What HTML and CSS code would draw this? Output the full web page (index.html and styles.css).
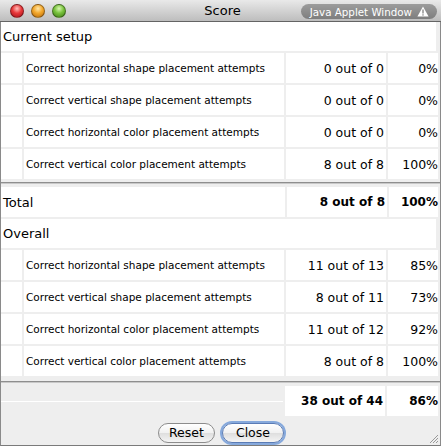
FILE: index.html
```html
<!DOCTYPE html>
<html>
<head>
<meta charset="utf-8">
<link rel="stylesheet" href="styles.css">
</head>
<body>
<div class="window">
  <div class="titlebar">
    <div class="lights">
      <span class="light red"></span>
      <span class="light yellow"></span>
      <span class="light green"></span>
    </div>
    <div class="title">Score</div>
    <div class="applet">Java Applet Window
      <svg class="warn" width="12" height="11" viewBox="0 0 12 11"><path d="M6 0.5 L11.6 10.5 L0.4 10.5 Z" fill="#fff"/><rect x="5.3" y="3.5" width="1.4" height="4" fill="#8a8a8a"/><rect x="5.3" y="8.3" width="1.4" height="1.3" fill="#8a8a8a"/></svg>
    </div>
  </div>
  <div class="content">
    <div class="head">Current setup</div>
    <div class="row"><div class="ind"></div><div class="lab">Correct horizontal shape placement attempts</div><div class="cnt">0 out of 0</div><div class="pct">0%</div></div>
    <div class="row"><div class="ind"></div><div class="lab">Correct vertical shape placement attempts</div><div class="cnt">0 out of 0</div><div class="pct">0%</div></div>
    <div class="row"><div class="ind"></div><div class="lab">Correct horizontal color placement attempts</div><div class="cnt">0 out of 0</div><div class="pct">0%</div></div>
    <div class="row"><div class="ind"></div><div class="lab">Correct vertical color placement attempts</div><div class="cnt">8 out of 8</div><div class="pct">100%</div></div>
    <div class="sep"></div>
    <div class="total"><div class="tlab">Total</div><div class="tcnt">8 out of 8</div><div class="tpct">100%</div></div>
    <div class="head">Overall</div>
    <div class="row"><div class="ind"></div><div class="lab">Correct horizontal shape placement attempts</div><div class="cnt">11 out of 13</div><div class="pct">85%</div></div>
    <div class="row"><div class="ind"></div><div class="lab">Correct vertical shape placement attempts</div><div class="cnt">8 out of 11</div><div class="pct">73%</div></div>
    <div class="row"><div class="ind"></div><div class="lab">Correct horizontal color placement attempts</div><div class="cnt">11 out of 12</div><div class="pct">92%</div></div>
    <div class="row"><div class="ind"></div><div class="lab">Correct vertical color placement attempts</div><div class="cnt">8 out of 8</div><div class="pct">100%</div></div>
    <div class="sep sep2"></div>
    <div class="total"><div class="tlab empty"></div><div class="tcnt">38 out of 44</div><div class="tpct">86%</div></div>
    <div class="buttons">
      <button class="btn">Reset</button>
      <button class="btn focus">Close</button>
    </div>
    <svg class="grip" width="11" height="11" viewBox="0 0 11 11"><path d="M10 2 L2 10 M10 5 L5 10 M10 8 L8 10" stroke="#999" stroke-width="1"/></svg>
  </div>
</div>
</body>
</html>
```
FILE: styles.css
```css
html, body { margin: 0; padding: 0; background: #fff; }
.window {
  width: 441px; height: 446px; box-sizing: border-box;
  display: flex; flex-direction: column;
  font-family: "DejaVu Sans", "Liberation Sans", sans-serif;
  color: #000;
  position: relative;
  border-left: 1px solid #8a8a8a; border-right: 1px solid #8a8a8a; border-bottom: 1px solid #7a7a7a;
}
.titlebar {
  height: 22px; box-sizing: border-box;
  background: linear-gradient(#e9e9e9, #bdbdbd);
  border-bottom: 1px solid #646464;
  margin: 0 -1px;
  display: flex; align-items: center;
  position: relative;
}
.lights { display: flex; gap: 7px; padding-left: 10px; padding-top: 1px; }
.light { width: 14px; height: 14px; border-radius: 50%; box-sizing: border-box; border: 1px solid rgba(0,0,0,0.35); }
.red { background: radial-gradient(circle at 50% 30%, #ffc0bb 0, #e8383a 45%, #a5121a 100%); }
.yellow { background: radial-gradient(circle at 50% 30%, #ffe7a8 0, #f3a72b 45%, #b86a0a 100%); }
.green { background: radial-gradient(circle at 50% 30%, #d9f7b0 0, #78c23c 45%, #3f7c14 100%); }
.title { position: absolute; left: 0; right: 0; text-align: center; font-size: 13px; top: 3px; pointer-events: none; padding-left: 4px; }
.applet {
  margin-left: auto; margin-right: 4px;
  height: 15px; padding: 0 8px 0 9px; border-radius: 8px;
  background: linear-gradient(#9c9c9c, #7e7e7e);
  color: #fff; font-size: 10.3px;
  display: flex; align-items: center; gap: 5px;
  position: relative; top: 1px;
}
.content { flex: 1; background: #eeeeee; display: flex; flex-direction: column; position: relative; }
.head {
  height: 29px; background: #fff; margin-right: 4px; margin-bottom: 2px;
  font-size: 13px; display: flex; align-items: center; padding-left: 2px;
}
.row { display: flex; height: 30px; margin-bottom: 2px; gap: 2px; margin-right: 2px; }
.row > div { background: #fff; display: flex; align-items: center; }
.ind { width: 21px; }
.lab { width: 258px; font-size: 10.5px; padding-left: 2px; }
.cnt { width: 98px; justify-content: flex-end; font-size: 12.5px; padding-right: 2px; }
.pct { flex: 1; justify-content: flex-end; font-size: 12.5px; }
.sep { height: 5px; margin-top: 1px; position: relative; }
.sep2 { height: 4px; margin-top: 3px; margin-bottom: 1px; }
.sep::before { content: ""; position: absolute; left: 0; right: 0; top: 0; height: 1px; background: #8e8e8e; }
.sep::after { content: ""; position: absolute; left: 0; right: 0; top: 1px; height: 1px; background: #c8c8c8; }
.total { display: flex; height: 30px; margin-bottom: 2px; gap: 2px; margin-right: 2px; }
.total > div { background: #fff; display: flex; align-items: center; }
.tlab { width: 282px; font-size: 13px; padding-left: 2px; }
.tlab.empty { background: #eee !important; border-bottom: 1px solid #fff; box-sizing: border-box; height: 16px; }
.tcnt { width: 98px; justify-content: flex-end; font-size: 12px; font-weight: bold; padding-right: 2px; }
.tpct { flex: 1; justify-content: flex-end; font-size: 12px; font-weight: bold; }
.buttons { flex: 1; display: flex; justify-content: center; align-items: flex-end; gap: 7px; padding-bottom: 2px; padding-left: 1px; }
.btn {
  font-family: "DejaVu Sans", sans-serif; font-size: 12.5px; color: #000;
  height: 20px; padding: 0 10px; border-radius: 10px;
  border: 1px solid #8c8c8c;
  background: linear-gradient(#ffffff, #f1f1f1 50%, #dedede 51%, #f4f4f4);
  line-height: 18px;
}
.btn.focus { border-color: #5a7bb5; box-shadow: 0 0 0 2px #86a9dc; padding: 0 13px; }
.grip { position: absolute; right: 1px; bottom: 1px; }
```
